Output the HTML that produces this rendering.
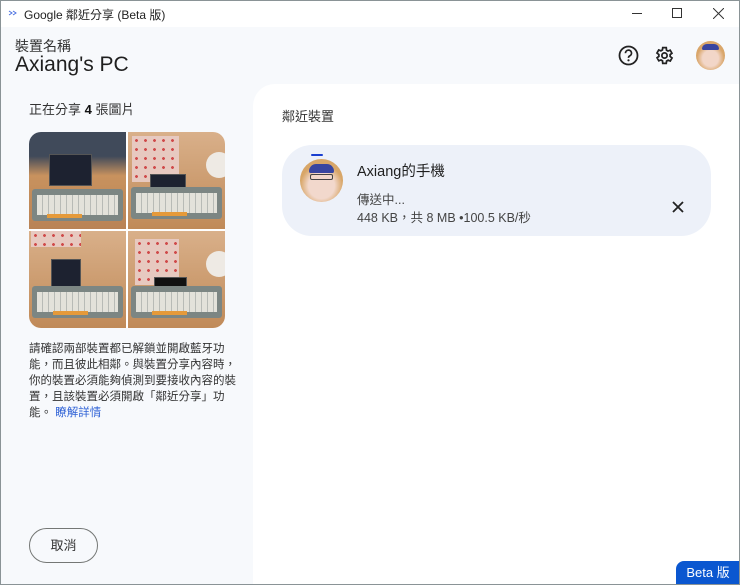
<!DOCTYPE html>
<html><head><meta charset="utf-8"><style>
*{margin:0;padding:0;box-sizing:border-box}
body{width:740px;height:585px;overflow:hidden;font-family:"Liberation Sans","Noto Sans CJK TC",sans-serif;background:#f7f9fc;position:relative;color:#1f1f1f}
.win{position:absolute;inset:0;border:1px solid #8a9396}
.title{position:absolute;left:0;top:0;width:740px;height:27px;background:#fff;font-size:12px}
.t{position:absolute;left:24px;top:6px;color:#222}
.panel{position:absolute;left:253px;top:84px;width:486px;height:500px;background:#fff;border-top-left-radius:22px}
.tile{position:absolute;width:97px;height:97px;overflow:hidden;background:linear-gradient(#d9b08a,#c08a58)}
.kb{position:absolute;left:3px;right:3px;bottom:10px;height:32px;background:#7c8683;border-radius:3px}
.keys{position:absolute;left:8px;right:8px;bottom:16px;height:20px;background:repeating-linear-gradient(90deg,#e3e2da 0 5px,#b8bbb6 5px 6px)}
.or{position:absolute;bottom:13px;height:4px;background:#e59a3a}
.tab{position:absolute;background:#1d2230;border:1px solid #555}
.art{position:absolute;background:#e7c9c0;background-image:radial-gradient(#d04a4a 20%,transparent 25%);background-size:9px 9px}
.ball{position:absolute;border-radius:50%;background:#eeeae4}
</style></head><body>
<div class="title">
<svg style="position:absolute;left:8px;top:10px" width="11" height="6"><path d="M1 1l3 2-3 2M5 1l3 2-3 2" stroke="#4a6fe0" fill="none" stroke-width="1"/></svg>
<span class="t">Google 鄰近分享 (Beta 版)</span>
<div style="position:absolute;left:632px;top:13px;width:10px;height:1px;background:#333"></div>
<div style="position:absolute;left:672px;top:8px;width:10px;height:10px;border:1px solid #333"></div>
<svg style="position:absolute;left:713px;top:8px" width="11" height="11"><path d="M0 0L11 11M11 0L0 11" stroke="#333"/></svg>
</div>
<div style="position:absolute;left:15px;top:36px;font-size:14px;color:#333">裝置名稱</div>
<div style="position:absolute;left:15px;top:53px;font-size:21px;color:#1f1f1f">Axiang's PC</div>
<svg style="position:absolute;left:618px;top:45px" width="21" height="21"><circle cx="10.5" cy="10.5" r="9" fill="none" stroke="#222" stroke-width="1.8"/><path d="M7.5 8.2a3 3 0 1 1 4.2 2.7c-.9.5-1.2 1-1.2 2" fill="none" stroke="#222" stroke-width="1.7"/><circle cx="10.5" cy="15.3" r="1.1" fill="#222"/></svg>
<svg style="position:absolute;left:654px;top:45px" width="21" height="21" viewBox="0 0 24 24"><path d="M19.4 13a7.5 7.5 0 0 0 0-2l2.1-1.6-2-3.5-2.5 1a7 7 0 0 0-1.7-1L15 3h-4l-.4 2.7a7 7 0 0 0-1.7 1l-2.5-1-2 3.5L6.6 11a7.5 7.5 0 0 0 0 2l-2.1 1.6 2 3.5 2.5-1a7 7 0 0 0 1.7 1L11 21h4l.4-2.7a7 7 0 0 0 1.7-1l2.5 1 2-3.5z" fill="none" stroke="#222" stroke-width="2" transform="translate(-1 0)"/><circle cx="12" cy="12" r="3" fill="none" stroke="#222" stroke-width="2"/></svg>
<div style="position:absolute;left:696px;top:41px;width:29px;height:29px;border-radius:50%;background:radial-gradient(circle at 50% 60%,#f2d6c8 35%,#d9a66a 60%)"><div style="position:absolute;left:6px;top:3px;width:17px;height:6px;border-radius:8px 8px 2px 2px;background:#3845a0"></div></div>

<div style="position:absolute;left:29px;top:99px;font-size:13px;color:#333">正在分享 <b style="color:#111">4</b> 張圖片</div>
<div style="position:absolute;left:29px;top:132px;width:196px;height:196px;border-radius:12px;overflow:hidden;background:#fff">
 <div class="tile" style="left:0;top:0;background:linear-gradient(#404a5a 0 25%,#c8925e 45%,#b98356)">
  <div class="tab" style="left:20px;top:22px;width:43px;height:32px"></div>
  <div class="kb" style="bottom:8px"></div><div class="keys" style="bottom:14px"></div><div class="or" style="left:18px;width:35px;bottom:11px"></div></div>
 <div class="tile" style="left:99px;top:0">
  <div class="art" style="left:4px;top:4px;width:47px;height:46px"></div><div class="ball" style="left:78px;top:20px;width:26px;height:26px"></div>
  <div class="tab" style="left:22px;top:42px;width:36px;height:24px"></div>
  <div class="kb"></div><div class="keys"></div><div class="or" style="left:24px;width:35px"></div></div>
 <div class="tile" style="left:0;top:99px">
  <div class="art" style="left:2px;top:0;width:50px;height:16px"></div>
  <div class="tab" style="left:22px;top:28px;width:30px;height:34px"></div>
  <div class="kb"></div><div class="keys"></div><div class="or" style="left:24px;width:35px"></div></div>
 <div class="tile" style="left:99px;top:99px">
  <div class="art" style="left:7px;top:8px;width:44px;height:46px"></div><div class="ball" style="left:78px;top:20px;width:26px;height:26px"></div>
  <div class="tab" style="left:26px;top:46px;width:33px;height:22px;background:#111"></div>
  <div class="kb"></div><div class="keys"></div><div class="or" style="left:24px;width:35px"></div></div>
</div>
<div style="position:absolute;left:29px;top:341px;width:210px;font-size:11.5px;line-height:16px;color:#333">請確認兩部裝置都已解鎖並開啟藍牙功能，而且彼此相鄰。與裝置分享內容時，你的裝置必須能夠偵測到要接收內容的裝置，且該裝置必須開啟「鄰近分享」功能。 <span style="color:#2f62d6">瞭解詳情</span></div>
<div style="position:absolute;left:29px;top:528px;width:69px;height:35px;border:1px solid #747775;border-radius:18px;font-size:13px;color:#333;text-align:center;line-height:33px">取消</div>

<div class="panel"></div>
<div style="position:absolute;left:282px;top:106px;font-size:13px;color:#333">鄰近裝置</div>
<div style="position:absolute;left:282px;top:145px;width:429px;height:91px;background:#edf1f9;border-radius:30px"></div>
<div style="position:absolute;left:300px;top:159px;width:43px;height:43px;border-radius:50%;background:radial-gradient(circle at 50% 62%,#f2d8cc 38%,#d8a668 62%)"><div style="position:absolute;left:9px;top:5px;width:25px;height:9px;border-radius:12px 12px 3px 3px;background:#3845a0"></div><div style="position:absolute;left:10px;top:15px;width:23px;height:6px;border:1.5px solid #444;border-radius:2px"></div></div>
<div style="position:absolute;left:311px;top:154px;width:12px;height:2px;background:#1a3fd0;border-radius:1px"></div>
<div style="position:absolute;left:357px;top:160px;font-size:14.5px;color:#1f1f1f">Axiang的手機</div>
<div style="position:absolute;left:357px;top:189px;font-size:12.5px;color:#444">傳送中...</div>
<div style="position:absolute;left:357px;top:207px;font-size:12.5px;color:#444">448 KB，共 8 MB •100.5 KB/秒</div>
<svg style="position:absolute;left:672px;top:201px" width="12" height="12"><path d="M1 1L11 11M11 1L1 11" stroke="#222" stroke-width="1.8"/></svg>
<div style="position:absolute;left:676px;top:561px;width:64px;height:24px;background:#0b57d0;color:#fff;font-size:13px;border-top-left-radius:8px;text-align:center;line-height:24px">Beta 版</div>
<div class="win"></div>
</body></html>
